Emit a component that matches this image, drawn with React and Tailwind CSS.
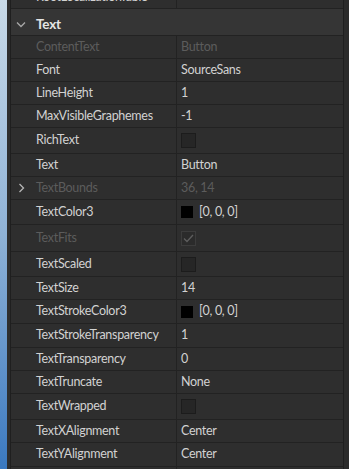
import React from "react";

const F = { fontFamily: "Lato, 'Open Sans', sans-serif" };

function Row({ h, name, value, dim, kind, chevron, top }) {
  return (
    <div className={`flex shrink-0 border-b border-[#222222] ${h} ${top || ""}`}>
      <div className="relative flex w-[166px] shrink-0 items-center border-r border-[#222222] pl-[25px]">
        {chevron && (
          <svg className="absolute left-[7px] top-1/2 -translate-y-1/2" width="7" height="10" viewBox="0 0 7 10">
            <path d="M1.5 1 L5.5 5 L1.5 9" fill="none" stroke="#b5b5b5" strokeWidth="1.3" />
          </svg>
        )}
        <span className={`text-[12.5px] tracking-[-0.3px] ${dim ? "text-[#5c5c5c]" : "text-[#d2d2d2]"}`}>{name}</span>
      </div>
      <div className="flex flex-1 items-center pl-[4px]">
        {kind === "check" && (
          <div className="h-[15px] w-[15px] border border-[#1c1c1c] bg-[#262626]" />
        )}
        {kind === "checked-dim" && (
          <div className="flex h-[15px] w-[15px] items-center justify-center border border-[#3c3c3c] bg-[#2b2b2b]">
            <svg width="11" height="9" viewBox="0 0 11 9">
              <path d="M1 4.5 L4 7.5 L10 1" fill="none" stroke="#5e5e5e" strokeWidth="1.3" />
            </svg>
          </div>
        )}
        {kind === "color" && (
          <div className="flex items-center">
            <div className="h-[12px] w-[12px] bg-black" />
            <span className="ml-[6px] text-[12.5px] tracking-[-0.3px] text-[#d2d2d2]">{value}</span>
          </div>
        )}
        {!kind && (
          <span className={`text-[12.5px] tracking-[-0.3px] ${dim ? "text-[#5c5c5c]" : "text-[#d2d2d2]"}`}>{value}</span>
        )}
      </div>
    </div>
  );
}

export default function App() {
  return (
    <div style={F} className="flex h-[469px] w-[349px] overflow-hidden bg-gradient-to-b from-[#c9dae8] via-[#8fb2d6] to-[#3a79c0]">
      <div className="w-[7px] shrink-0" />
      <div className="flex flex-1 bg-[#2e2e2e] pl-[3px]">
        <div className="flex min-w-0 flex-1 flex-col border-l border-[#1f1f1f]">
          <Row h="h-[23px]" top="-mt-[14px]" name="RootLocalizationTable" value="" />
          <div className="flex h-[27px] shrink-0 items-center border-b border-[#222222] bg-[#353535] pt-[4px]">
            <svg className="ml-[5px]" width="10" height="7" viewBox="0 0 10 7">
              <path d="M1 1.5 L5 5.5 L9 1.5" fill="none" stroke="#a8a8a8" strokeWidth="1.3" />
            </svg>
            <span className="ml-[10px] text-[13.5px] font-bold tracking-[-0.2px] text-[#e4e4e4]">Text</span>
          </div>
          <Row h="h-[23px]" name="ContentText" value="Button" dim />
          <Row h="h-[23px]" name="Font" value="SourceSans" />
          <Row h="h-[23px]" name="LineHeight" value="1" />
          <Row h="h-[23px]" name="MaxVisibleGraphemes" value="-1" />
          <Row h="h-[26px]" name="RichText" kind="check" />
          <Row h="h-[23px]" name="Text" value="Button" />
          <Row h="h-[23px]" name="TextBounds" value="36, 14" dim chevron />
          <Row h="h-[25px]" name="TextColor3" kind="color" value="[0, 0, 0]" />
          <Row h="h-[27px]" name="TextFits" kind="checked-dim" dim />
          <Row h="h-[25px]" name="TextScaled" kind="check" />
          <Row h="h-[23px]" name="TextSize" value="14" />
          <Row h="h-[24px]" name="TextStrokeColor3" kind="color" value="[0, 0, 0]" />
          <Row h="h-[24px]" name="TextStrokeTransparency" value="1" />
          <Row h="h-[23px]" name="TextTransparency" value="0" />
          <Row h="h-[23px]" name="TextTruncate" value="None" />
          <Row h="h-[26px]" name="TextWrapped" kind="check" />
          <Row h="h-[23px]" name="TextXAlignment" value="Center" />
          <Row h="h-[24px]" name="TextYAlignment" value="Center" />
          <Row h="h-[23px]" name="" value="" />
        </div>
        <div className="w-[6px] shrink-0 border-l border-[#1f1f1f] bg-[#2b2b2b]" />
      </div>
    </div>
  );
}
